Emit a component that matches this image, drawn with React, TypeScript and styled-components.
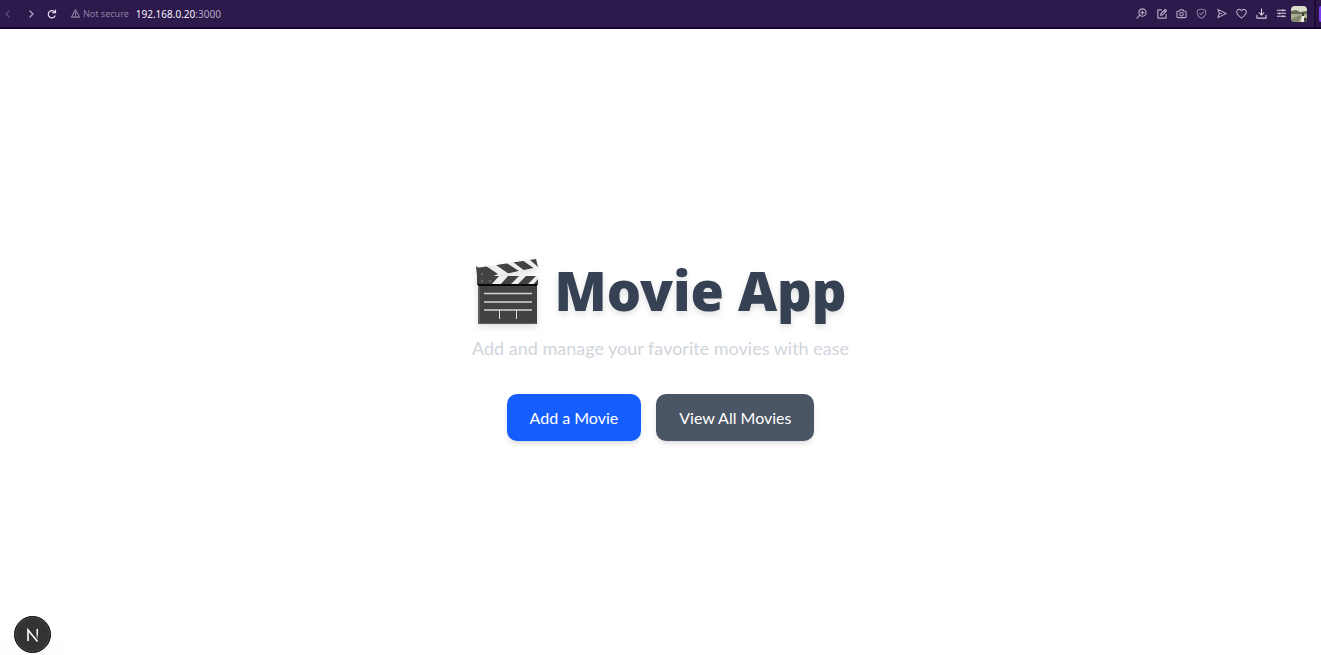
import React from "react";
import styled, { createGlobalStyle } from "styled-components";

const GlobalStyle = createGlobalStyle`
  *, *::before, *::after { box-sizing: border-box; }
  body {
    margin: 0;
    background: #ffffff;
    font-family: Lato, "Noto Sans", sans-serif;
  }
`;

const Page = styled.div`
  min-height: 100vh;
  display: flex;
  flex-direction: column;
`;

const BrowserBar = styled.header`
  height: 29px;
  flex: none;
  display: flex;
  align-items: stretch;
  background: #2d1a4d;
  border-bottom: 2px solid #16032f;
  font-family: "Noto Sans", sans-serif;
`;

const BarContent = styled.div`
  flex: 1;
  display: flex;
  align-items: center;
  justify-content: space-between;
  padding-right: 7px;
`;

const BarGroup = styled.div`
  display: flex;
  align-items: center;
`;

const Tools = styled(BarGroup)`
  gap: 4px;
  margin-right: 2px;
`;

const NavButtons = styled(BarGroup)`
  gap: 4px;
  margin-right: 10px;
`;

const IconButton = styled.button<{ $color?: string; $wide?: boolean }>`
  width: ${(p) => (p.$wide ? 20 : 16)}px;
  height: 16px;
  padding: 0;
  border: 0;
  display: flex;
  align-items: center;
  justify-content: center;
  background: transparent;
  color: ${(p) => p.$color ?? "#b3a9c4"};
  cursor: pointer;
`;

const Icon = styled.svg`
  width: 12px;
  height: 12px;
  display: block;
  fill: none;
  stroke: currentColor;
  stroke-width: 1.2;
  stroke-linecap: round;
  stroke-linejoin: round;
`;

const ToolIcon = styled(Icon)`
  width: 11px;
  height: 11px;
`;

const Security = styled(BarGroup)`
  gap: 2px;
  margin-right: 7px;
  color: #8d80a3;
  font-size: 9px;
  line-height: 14px;
`;

const Address = styled.span`
  color: #f6f2fb;
  font-size: 10px;
  line-height: 14px;
`;

const Port = styled.span`
  color: #b3a9c4;
`;

const Avatar = styled.svg`
  width: 16px;
  height: 16px;
  border-radius: 4px;
  display: block;
`;

const SidePanelEdge = styled.div`
  width: 7px;
  display: flex;
  align-items: center;
  justify-content: flex-end;
  border-left: 2px solid #1d0b38;
  background: #2a1747;

  &::after {
    content: "";
    width: 2px;
    height: 16px;
    border-radius: 2px 0 0 2px;
    background: #7a3ff0;
  }
`;

const Main = styled.main`
  flex: 1;
  display: flex;
  flex-direction: column;
  align-items: center;
  justify-content: center;
  padding: 26px 16px 16px;
  text-align: center;
`;

const Title = styled.h1`
  margin: 0 0 8px;
  display: flex;
  align-items: flex-end;
  gap: 14px;
  color: #364153;
  font-family: "Noto Sans", sans-serif;
  font-size: 54px;
  font-weight: 900;
  line-height: 72px;
  filter: drop-shadow(0 3px 3px rgba(0, 0, 0, 0.12));
`;

const Clapper = styled.svg`
  width: 66px;
  height: 68px;
  flex: none;
`;

const Tagline = styled.p`
  margin: 0 0 32px;
  color: #d1d5dc;
  font-size: 18px;
  line-height: 28px;
`;

const Actions = styled.nav`
  display: flex;
  gap: 15px;
`;

const ActionLink = styled.a<{ $primary?: boolean }>`
  padding: 12px 23px;
  border-radius: 10px;
  background: ${(p) => (p.$primary ? "#155dfc" : "#4a5565")};
  color: #ffffff;
  font-size: 16px;
  line-height: 23px;
  text-decoration: none;
  box-shadow: 0 4px 6px -1px rgba(0, 0, 0, 0.1), 0 2px 4px -2px rgba(0, 0, 0, 0.1);
`;

const DevBadge = styled.button`
  position: fixed;
  left: 14px;
  bottom: 2px;
  width: 37px;
  height: 37px;
  padding: 0;
  display: flex;
  align-items: center;
  justify-content: center;
  border: 1px solid #0d0d0d;
  border-radius: 50%;
  background: #333333;
  box-shadow: inset 0 0 0 1px #4a4a4a, 0 16px 32px -8px rgba(0, 0, 0, 0.1);
  cursor: pointer;
`;

const tools: { label: string; color?: string; drawing: React.ReactNode }[] = [
  {
    label: "Zoom",
    drawing: <><circle cx="7" cy="5" r="4" /><path d="M4.2 7.8 1 11M7 3.3v3.4M5.3 5h3.4" /></>,
  },
  {
    label: "Edit page",
    drawing: <><path d="M6 2H2v9h9V7" /><path d="M5 8l.5-2L10 1.5 11.5 3 7 7.5 5 8zM8.7 2.8l1.5 1.5" /></>,
  },
  {
    label: "Snapshot",
    drawing: <><path d="M2 3.5h1.500L4.300 2h3.400l.8 1.500H10q1 0 1 1v5q0 1-1 1H2q-1 0-1-1v-5q0-1 1-1z" /><circle cx="6" cy="6.8" r="1.9" /></>,
  },
  {
    label: "Ad blocker",
    color: "#82749b",
    drawing: <><path d="M6 1 10.500 2.500v3.500c0 2.500-1.800 4-4.500 5.200C3.300 10 1.500 8.500 1.500 6V2.500z" /><path d="m4 5.800 1.500 1.500L8.200 4.500" /></>,
  },
  {
    label: "Send",
    drawing: <path d="M2 1.500 11 6 2 10.500 3.600 6zM3.600 6H6" />,
  },
  {
    label: "Favorite",
    drawing: <path d="M6 11C3.200 8.800 .700 6.900 .700 4.300 .700 1.300 4.500.6 6 3 7.500.6 11.300 1.300 11.300 4.300c0 2.600-2.500 4.500-5.300 6.700z" />,
  },
  {
    label: "Downloads",
    color: "#d5cde0",
    drawing: <path d="M6 1v6.500M3.500 5.200 6 7.700l2.500-2.500M1 8v3h10V8" />,
  },
  {
    label: "Easy setup",
    color: "#d5cde0",
    drawing: <path d="M1.500 2.500h9M1.500 5.800h9M1.500 9h9M7.500 1.800v1.400M4 5.100v1.400M7.500 8.300v1.400" />,
  },
];

function ClapperBoard() {
  return (
    <Clapper viewBox="0 0 66 68" role="img" aria-label="Clapper board">
      <defs>
        <clipPath id="arm"><path d="M2 10 62 1l2 8L17 19z" /></clipPath>
        <clipPath id="bar"><path d="M3 18h61v9H3z" /></clipPath>
      </defs>
      <path d="M4 27h59v39H4z" fill="#424242" />
      <path d="M4 27h2v39H4z" fill="#5b5f63" />
      <path d="M4 65h59v1H4z" fill="#5b5f63" />
      <g clipPath="url(#arm)">
        <path d="M0 0h66v22H0z" fill="#eeeeee" />
        <path d="m22 7 9-3 14 9-10 3zM39 4l9-2 13 9-10 2zM55 1l7-1 8 10-6-1zM3 9l9-1 12 8-9 4z" fill="#424242" />
      </g>
      <g clipPath="url(#bar)">
        <path d="M3 18h61v9H3z" fill="#eeeeee" />
        <path d="M3 18h22l-8 9H3zM34 18h11l-9 9H26zM52 18h10l-9 9H43zM64 21v6h-5z" fill="#424242" />
      </g>
      <path d="m2 8 4 3 12 8-4 8H4z" fill="#424242" />
      <path d="M4 26h59v2H4z" fill="#080808" />
      <g fill="#777777">
        <circle cx="8" cy="16" r="1" /><circle cx="8" cy="23" r="1" /><circle cx="16" cy="23" r="1" />
      </g>
      <path d="M10 35.500h48M10 44h48M10 52h48" stroke="#d5d5d5" strokeWidth="1.500" />
      <path d="M25.500 52v9M42.500 52v9" stroke="#e0e0e0" />
    </Clapper>
  );
}

export default function App() {
  return (
    <Page>
      <GlobalStyle />
      <BrowserBar>
        <BarContent>
          <BarGroup>
            <NavButtons>
              <IconButton aria-label="Back" $color="#5f4f7b">
                <Icon viewBox="0 0 12 12"><path d="M7 3 4 6l3 3" /></Icon>
              </IconButton>
              <IconButton aria-label="Forward" $wide $color="#b3a9c4">
                <Icon viewBox="0 0 12 12"><path d="m6 3 3 3-3 3" /></Icon>
              </IconButton>
              <IconButton aria-label="Reload" $color="#e6dff0">
                <Icon viewBox="0 0 12 12">
                  <path d="M9 4.500A3.600 3.600 0 1 0 9 8M9.500 2v2.700H6.800" />
                </Icon>
              </IconButton>
            </NavButtons>
            <Security>
              <ToolIcon viewBox="0 0 12 12"><path d="M6 2 10.500 10h-9zM6 5v2.500M6 8.800v.1" /></ToolIcon>
              <span>Not secure</span>
            </Security>
            <Address>192.168.0.20<Port>:3000</Port></Address>
          </BarGroup>
          <BarGroup>
            <Tools>
              {tools.map((tool) => (
                <IconButton key={tool.label} aria-label={tool.label} $color={tool.color}>
                  <ToolIcon viewBox="0 0 12 12">{tool.drawing}</ToolIcon>
                </IconButton>
              ))}
            </Tools>
            <Avatar viewBox="0 0 16 16" role="img" aria-label="Profile">
              <path d="M0 0h16v16H0z" fill="#dcdccb" />
              <path d="M0 5 5 4l4 2 7-1v4H0z" fill="#656b55" />
              <path d="M0 8h16v8H0z" fill="#a9ad90" />
              <path d="M0 13 9 9l2 1-4 6H0z" fill="#83886b" />
              <path d="M11 9h2l1 7h-4z" fill="#eeeee8" />
              <path d="M11 7h2v3h-2zM13 12h3v4h-3z" fill="#35382f" />
            </Avatar>
          </BarGroup>
        </BarContent>
        <SidePanelEdge />
      </BrowserBar>
      <Main>
        <Title><ClapperBoard />Movie App</Title>
        <Tagline>Add and manage your favorite movies with ease</Tagline>
        <Actions>
          <ActionLink href="#add" $primary>Add a Movie</ActionLink>
          <ActionLink href="#movies">View All Movies</ActionLink>
        </Actions>
      </Main>
      <DevBadge aria-label="Open Next.js Dev Tools">
        <svg width="14" height="14" viewBox="0 0 14 14" fill="none" aria-hidden="true">
          <defs>
            <linearGradient id="stem" x1="0" y1="0" x2="0" y2="1">
              <stop offset="0.400" stopColor="#ffffff" />
              <stop offset="1" stopColor="#ffffff" stopOpacity="0" />
            </linearGradient>
          </defs>
          <path d="M2 13V2l9.500 11.500" stroke="#ffffff" strokeWidth="1.600" />
          <path d="M10.500 1h1.500v11h-1.500z" fill="url(#stem)" />
        </svg>
      </DevBadge>
    </Page>
  );
}
